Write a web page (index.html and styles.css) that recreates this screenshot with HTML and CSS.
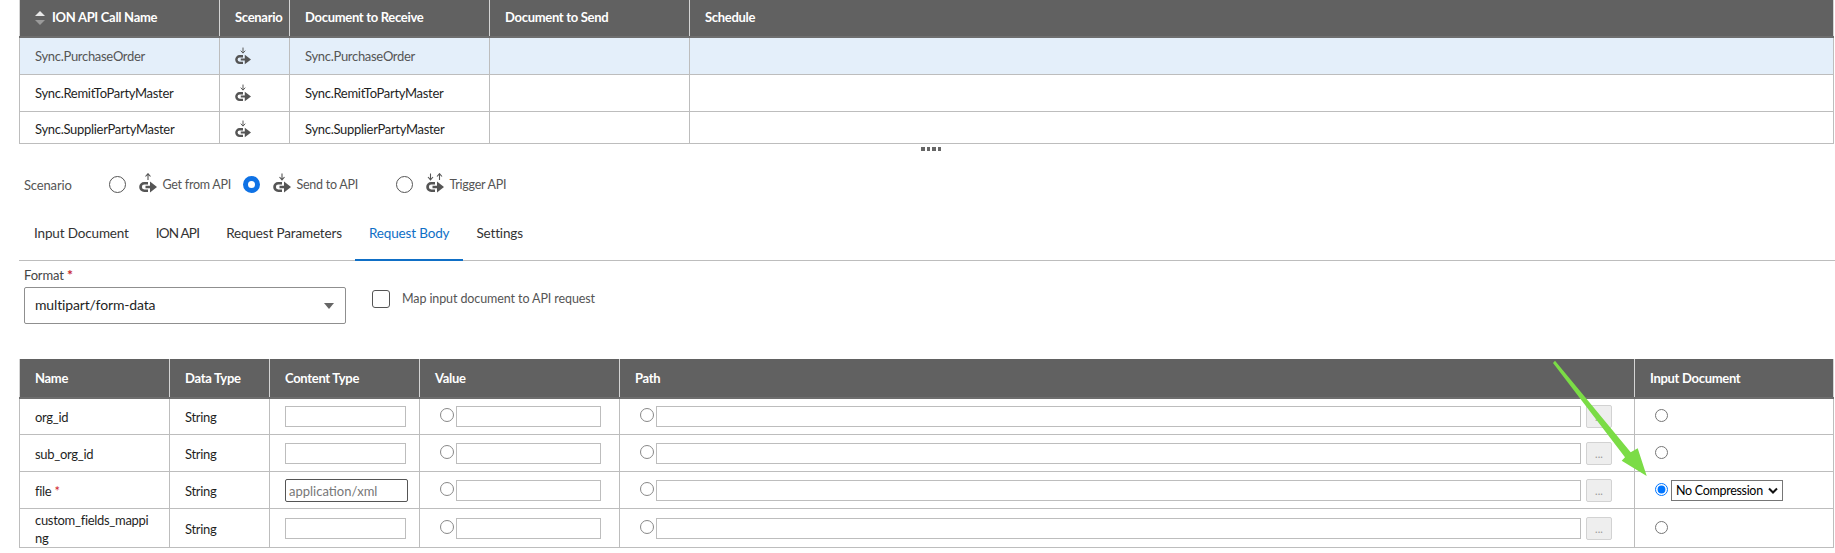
FILE: index.html
```html
<!DOCTYPE html>
<html lang="en">
<head>
<meta charset="utf-8">
<title>ION API</title>
<link rel="stylesheet" href="styles.css">
</head>
<body>
<svg class="defs" width="0" height="0" aria-hidden="true">
  <defs>
    <symbol id="hook" viewBox="0 0 18 20">
      <path d="M9 9H5.200a5 5 0 0 0 0 10H9v-2.600H5.300a2.400 2.400 0 0 1 0-4.800H9z" fill="currentColor"/>
      <path d="M6.500 12.800h4.500V8.600l7 5.400-7 5.400v-4.200H6.500z" fill="currentColor"/>
    </symbol>
    <symbol id="down" viewBox="0 0 18 20">
      <path d="M9 .5V6.500M6.500 4 9 6.800 11.500 4" fill="none" stroke="currentColor" stroke-width="1.100"/>
    </symbol>
    <symbol id="up" viewBox="0 0 18 20">
      <path d="M9 7V1M6.500 3.500 9 .7 11.500 3.500" fill="none" stroke="currentColor" stroke-width="1.100"/>
    </symbol>
  </defs>
</svg>
<section class="grid-top">
  <table class="grid">
    <colgroup><col class="t1"><col class="t2"><col class="t3"><col class="t4"><col></colgroup>
    <thead>
      <tr><th><span class="sort"><i class="up"></i><i class="down"></i></span>ION API Call Name</th><th class="scen">Scenario</th><th>Document to Receive</th><th>Document to Send</th><th>Schedule</th></tr>
    </thead>
    <tbody>
      <tr class="sel"><td>Sync.PurchaseOrder</td><td class="ic"><svg class="api" viewBox="0 0 18 20"><use href="#down"/><use href="#hook"/></svg></td><td>Sync.PurchaseOrder</td><td></td><td></td></tr>
      <tr><td>Sync.RemitToPartyMaster</td><td class="ic"><svg class="api" viewBox="0 0 18 20"><use href="#down"/><use href="#hook"/></svg></td><td>Sync.RemitToPartyMaster</td><td></td><td></td></tr>
      <tr class="short"><td>Sync.SupplierPartyMaster</td><td class="ic"><svg class="api" viewBox="0 0 18 20"><use href="#down"/><use href="#hook"/></svg></td><td>Sync.SupplierPartyMaster</td><td></td><td></td></tr>
    </tbody>
  </table>
</section>
<div class="splitter"><i></i><i></i><i></i><i></i></div>
<div class="scenario">
  <span class="sc-label">Scenario</span>
  <span class="opt o1"><span class="ring"></span><svg class="api big" viewBox="0 0 18 20"><use href="#up"/><use href="#hook"/></svg><span>Get from API</span></span>
  <span class="opt o2"><span class="ring on"></span><svg class="api big" viewBox="0 0 18 20"><use href="#down"/><use href="#hook"/></svg><span>Send to API</span></span>
  <span class="opt o3"><span class="ring"></span><svg class="api big" viewBox="0 0 18 20"><use href="#down" x="-4.500"/><use href="#up" x="4.500"/><use href="#hook"/></svg><span>Trigger API</span></span>
</div>
<nav class="tabs">
  <a>Input Document</a><a class="caps">ION API</a><a>Request Parameters</a><a class="active">Request Body</a><a>Settings</a>
</nav>
<div class="format">
  <div class="fmt-field">
    <label class="fmt-label">Format <b>*</b></label>
    <div class="fmt-select"><span>multipart/form-data</span><i class="caret"></i></div>
  </div>
  <div class="map"><span class="box"></span><span class="map-text">Map input document to API request</span></div>
</div>
<table class="grid body">
  <colgroup><col class="b1"><col class="b2"><col class="b3"><col class="b4"><col class="b5"><col></colgroup>
  <thead>
    <tr><th>Name</th><th>Data Type</th><th>Content Type</th><th>Value</th><th>Path</th><th>Input Document</th></tr>
  </thead>
  <tbody>
    <tr><td>org_id</td><td>String</td><td><input class="ct"></td><td><div class="pair"><input type="radio" class="mini"><input class="val"></div></td><td><div class="pair"><input type="radio" class="mini"><input class="path"><button class="dots">...</button></div></td><td><div class="pair doc"><input type="radio" class="doc-r"></div></td></tr>
    <tr><td>sub_org_id</td><td>String</td><td><input class="ct"></td><td><div class="pair"><input type="radio" class="mini"><input class="val"></div></td><td><div class="pair"><input type="radio" class="mini"><input class="path"><button class="dots">...</button></div></td><td><div class="pair doc"><input type="radio" class="doc-r"></div></td></tr>
    <tr><td>file <b class="req">*</b></td><td>String</td><td><input class="ct focus" placeholder="application/xml"></td><td><div class="pair"><input type="radio" class="mini"><input class="val"></div></td><td><div class="pair"><input type="radio" class="mini"><input class="path"><button class="dots">...</button></div></td><td><div class="pair doc"><input type="radio" class="doc-r" checked><span class="comp-wrap"><select class="comp"><option>No Compression</option></select><svg class="chev" viewBox="0 0 10 7"><path d="M1 1.500 5 5.500 9 1.500" fill="none" stroke="#111" stroke-width="2"/></svg></span></div></td></tr>
    <tr class="tall"><td class="wrap">custom_fields_mapping</td><td>String</td><td><input class="ct"></td><td><div class="pair"><input type="radio" class="mini"><input class="val"></div></td><td><div class="pair"><input type="radio" class="mini"><input class="path"><button class="dots">...</button></div></td><td><div class="pair doc"><input type="radio" class="doc-r"></div></td></tr>
  </tbody>
</table>
<svg class="arrow" width="110" height="125" viewBox="0 0 110 125"><polygon points="0,3 2,.7 77.700,92.300 84.700,88.300 93.700,116 68.700,100.700 72,97.300" fill="#7bdc46"/></svg>
</body>
</html>
```
FILE: styles.css
```css
* { box-sizing: border-box; }
html, body { margin: 0; padding: 0; }
body {
  position: relative;
  width: 1835px;
  height: 553px;
  overflow: hidden;
  background: #fff;
  font-family: "Lato", "Liberation Sans", sans-serif;
  font-size: 13px;
  letter-spacing: -.15px;
  color: #1f1f1f;
}
.defs { position: absolute; }
.grid-top { padding-left: 19px; }
.grid {
  border-collapse: collapse;
  table-layout: fixed;
  width: 1815px;
}
.grid th {
  background: #616161;
  color: #fff;
  font-weight: 700;
  font-size: 13px;
  letter-spacing: -.3px;
  text-align: left;
  padding: 0 15px;
  border-left: 1px solid #d4d4d4;
  border-right: 1px solid #d4d4d4;
  border-bottom: 2px solid #6e6e6e;
}
.grid td {
  padding: 0 15px;
  border: 1px solid #bdbdbd;
  vertical-align: middle;
  letter-spacing: -.3px;
}
.grid-top .grid { height: 143px; }
.grid-top thead tr { height: 37px; }
.grid-top thead th { padding-bottom: 3px; }
.grid-top tbody tr { height: 37px; }
.grid-top tbody tr.short { height: 32px; }
.grid-top tbody tr.short td { padding-top: 3px; }
.t1 { width: 200px; }
.t2 { width: 70px; }
.t3 { width: 200px; }
.t4 { width: 200px; }
.grid th.scen { padding: 0 0 3px 15px; }
.sort { display: inline-flex; flex-direction: column; gap: 4px; margin: -8px 7px -8px 0; vertical-align: middle; }
.sort i { display: block; width: 0; height: 0; border-left: 5px solid transparent; border-right: 5px solid transparent; }
.sort .up { border-bottom: 5px solid #e8e8e8; }
.sort .down { border-top: 5px solid #9a9a9a; }
.sel td { background: #e4effa; color: #555; }
.api { display: block; width: 18px; height: 20px; color: #555; }
.ic .api { width: 16px; height: 18px; }
.grid td.ic { padding: 0 0 0 15px; }
.splitter { display: flex; justify-content: center; gap: 2px; height: 10px; padding-top: 3px; padding-left: 27px; }
.splitter i { width: 3.500px; height: 4px; background: #666; }
.scenario { height: 40px; display: flex; align-items: center; padding-left: 24px; color: #555; margin-top: 11px; white-space: nowrap; }
.sc-label { width: 84.500px; }
.opt { display: flex; align-items: center; font-size: 12.500px; letter-spacing: -.25px; }
.ring { width: 17px; height: 17px; border: 1.500px solid #555; border-radius: 50%; margin-right: 13px; background: #fff; }
.ring.on { border: 5px solid #0f72e5; }
.big { margin: -3px 6px 0 0; }
.o1 { width: 134px; }
.o2 { width: 153px; }
.tabs { display: flex; height: 56px; margin-left: 19px; border-bottom: 1px solid #bdbdbd; padding-left: 1.500px; color: #333; font-size: 13.500px; letter-spacing: -.15px; }
.tabs a { display: flex; align-items: center; padding: 2px 13.500px 0; height: 56px; border-bottom: 2px solid transparent; }
.tabs a.caps { letter-spacing: -.8px; }
.tabs a.active { color: #0f6fc6; border-bottom-color: #0f6fc6; }
.format { display: flex; padding-left: 24px; height: 98px; }
.fmt-field { width: 322px; padding-top: 5px; }
.fmt-label { display: block; color: #444; height: 21px; line-height: 18px; }
.fmt-label b { color: #c8262b; font-weight: 700; font-size: 14px; }
.fmt-select { position: relative; height: 37px; border: 1px solid #8f8f8f; border-radius: 2px; display: flex; align-items: center; padding: 0 0 2px 10px; font-size: 14px; }
.caret { position: absolute; right: 11px; top: 15px; border-left: 5px solid transparent; border-right: 5px solid transparent; border-top: 6px solid #666; }
.map { display: flex; gap: 12px; margin-left: 26px; padding-top: 29px; color: #555; font-size: 12.500px; letter-spacing: -.1px; }
.map-text { margin-top: 1px; }
.box { width: 18px; height: 18px; border: 1px solid #555; border-radius: 3px; }
.body { margin-left: 19px; }
.body thead tr { height: 39px; }
.body tbody tr { height: 37px; }
.body tbody tr.tall { height: 39px; }
.body tbody td { padding-top: 1px; }
.b1 { width: 150px; }
.b2 { width: 100px; }
.b3 { width: 150px; }
.b4 { width: 200px; }
.b5 { width: 1015px; }
.wrap { word-break: break-all; line-height: 18px; }
.req { color: #d0252b; font-weight: 400; }
.grid input:not([type=radio]) { height: 21px; border: 1px solid #bdbdbd; padding: 0 3px; font: inherit; display: block; background: #fff; outline: 0; }
.ct { width: 121px; }
.grid input.ct.focus { width: 123px; height: 23px; border: 1px solid #555; border-radius: 2px; }
.ct.focus::placeholder { color: #777; opacity: 1; }
.pair { display: flex; align-items: center; }
.mini { appearance: none; width: 14px; height: 14px; border: 1px solid #888; border-radius: 50%; margin: -3px 2px 0 5px; flex: none; background: #fff; }
.val { width: 145px; }
.path { width: 925px; }
.dots { width: 26px; height: 23px; margin-left: 5px; border: 1px solid #d2d2d2; border-radius: 2px; background: #eee; color: #999; font: inherit; font-size: 11px; padding: 0; flex: none; }
.doc { gap: 3px; }
.doc-r { margin: -3px 0 0 5px; width: 13px; height: 13px; flex: none; }
.comp-wrap { position: relative; display: block; width: 112px; height: 21px; }
.comp { appearance: none; display: block; width: 112px; height: 21px; font: inherit; font-size: 12.500px; letter-spacing: -.3px; border: 1px solid #767676; border-radius: 0; background: #fff; color: #000; padding: 0 0 0 4px; margin: 0; }
.chev { position: absolute; right: 5px; top: 7px; width: 10px; height: 7px; pointer-events: none; }
.arrow { position: absolute; left: 1553px; top: 360px; }
```
